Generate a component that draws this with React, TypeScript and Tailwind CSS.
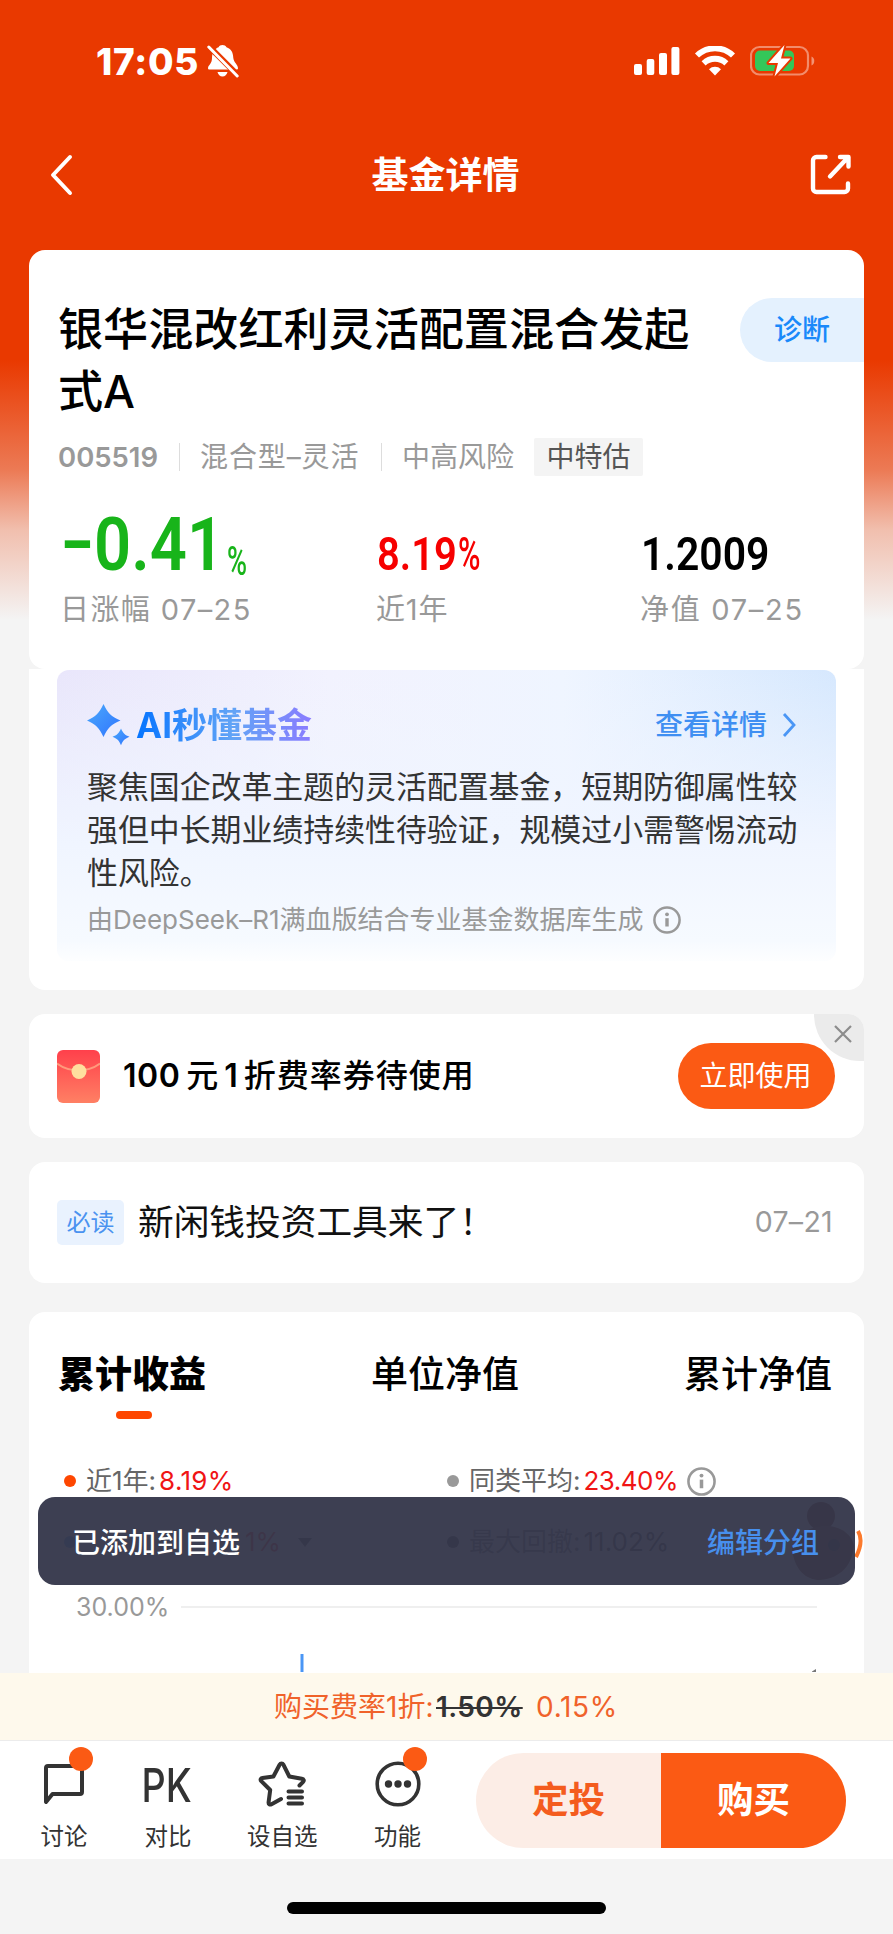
import type { ReactNode } from "react";

function StatusBar() {
    return (
        <div className="flex h-[122px] items-center pl-[96px] pr-[77px] text-white">
            <span className="w-[103px] text-[37px] font-extrabold leading-none tracking-[0.7px]">17:05</span>
            <svg className="ml-[8px]" width="32" height="34" viewBox="0 0 32 34" fill="none">
                <path d="M15.5 1c-1.8 0-3.300.8-3.900 2.200C8 4.500 5 8 5 14c0 6-4 7-4 10.200 0 .8.600 1.300 1.500 1.300h27c.9 0 1.500-.5 1.500-1.300C31 20.500 27 19 26.300 14c-.3-6-2.300-9.200-6.800-10.700C18.800 1.800 17.200 1 15.500 1Z" fill="#fff" />
                <path d="M10.500 28h10c-.6 2.600-2.500 4.500-5 4.500s-4.400-1.900-5-4.500Z" fill="#fff" />
                <path d="M1.500 2 31 31.500" stroke="#e93900" strokeWidth="6" />
                <path d="M1.800 3 30.200 32" stroke="#fff" strokeWidth="3" strokeLinecap="round" />
            </svg>
            <svg className="ml-auto" width="46" height="28" viewBox="0 0 46 28" fill="#fff">
                <rect x="0" y="17" width="8" height="11" rx="2" />
                <rect x="12.700" y="12" width="7.600" height="16" rx="2" />
                <rect x="25" y="6" width="8" height="22" rx="2" />
                <rect x="37.400" y="0" width="8" height="28" rx="2" />
            </svg>
            <svg className="ml-[14px]" width="42" height="30" viewBox="0 0 42 30" fill="none" stroke="#fff">
                <path d="M3 9.500a26 26 0 0 1 36 0" strokeWidth="5.800" />
                <path d="M9.600 17.300a16.500 16.500 0 0 1 22.800 0" strokeWidth="5.800" />
                <path d="M21 29.500 15 23.300a8.600 8.600 0 0 1 12 0Z" fill="#fff" stroke="none" />
            </svg>
            <svg className="ml-[14px]" width="66" height="32" viewBox="0 0 66 32" fill="none">
                <rect x="1" y="2" width="57" height="27.500" rx="8.500" stroke="#fff" strokeOpacity=".42" strokeWidth="2.200" />
                <path d="M61.500 11.500v9c3.700-1.500 3.700-7.500 0-9Z" fill="#fff" fillOpacity=".45" />
                <rect x="5" y="5.500" width="39" height="20.500" rx="5" fill="#34c759" />
                <path d="M34.500 0 18.500 18h9.500l-3.500 13.500L40.500 13.500H31Z" fill="#fff" stroke="#e93900" strokeWidth="4" strokeLinejoin="round" paintOrder="stroke" />
            </svg>
        </div>
    );
}

function NavBar() {
    return (
        <div className="flex h-[106px] items-center justify-between pl-[49px] pr-[41px]">
            <svg width="24" height="42" viewBox="0 0 24 42" fill="none" stroke="#fff" strokeWidth="4" strokeLinecap="round" strokeLinejoin="round">
                <path d="M21 3 4 21l17 18" />
            </svg>
            <h1 className="ml-[8px] text-[37px] font-bold leading-none text-white">基金详情</h1>
            <svg width="42" height="42" viewBox="0 0 42 42" fill="none" stroke="#fff" strokeWidth="4.400" strokeLinecap="round" strokeLinejoin="round">
                <path d="M15.500 3H6.500A3.500 3.500 0 0 0 3 6.500v28A3.500 3.500 0 0 0 6.500 38h28a3.500 3.500 0 0 0 3.500-3.500V29.500" />
                <path d="M30 3h8.500v9.500M37 4.500 20 22.500" />
            </svg>
        </div>
    );
}

function InfoIcon({ size }: { size: number }) {
    return (
        <svg width={size} height={size} viewBox="0 0 28 28" fill="none" stroke="#999">
            <circle cx="14" cy="14" r="12.600" strokeWidth="2.500" />
            <path d="M14 12.200v8.300" strokeWidth="3.400" />
            <circle cx="14" cy="8.300" r="1.900" fill="#999" stroke="none" />
        </svg>
    );
}

function FundCard() {
    return (
        <section className="h-[419px] rounded-[16px] bg-white pt-[48px]">
            <div className="flex items-start justify-between">
                <h2 className="w-[670px] pl-[29px] pt-[1px] text-[45.100px] font-medium leading-[62px] text-black">
                    银华混改红利灵活配置混合发起式A
                </h2>
                <button className="flex h-[64px] w-[124px] items-center rounded-l-full bg-[#e4f1fe] pl-[34px] text-[28px] font-medium leading-none text-[#1989fa]">
                    诊断
                </button>
            </div>
            <div className="mt-[15px] flex h-[38px] items-center pl-[29px] text-[28px] leading-none text-[#999]">
                <span className="w-[121px] pt-[1px] text-[27.500px] font-semibold">005519</span>
                <i className="h-[28px] w-[1px] bg-[#ddd]" />
                <span className="ml-[20px] w-[181px] whitespace-nowrap tracking-[0.9px]">混合型–灵活</span>
                <i className="h-[28px] w-[1px] bg-[#ddd]" />
                <span className="ml-[20px] w-[132px]">中高风险</span>
                <span className="flex h-[38px] w-[109px] items-center justify-center rounded-[2px] bg-[#f4f4f4] text-[#555]">中特估</span>
            </div>
            <div className="mt-[29px] flex h-[76px] pl-[32px] font-[Roboto] font-semibold leading-none">
                <div className="flex w-[316px] text-[#18b41a]">
                    <span className="w-[33px] origin-left scale-x-[0.68] text-[74px] leading-[80px]">–</span>
                    <span className="w-[133px] origin-left scale-x-[0.88] text-[74px] leading-[80px]">0.41</span>
                    <span className="w-[20px] origin-left scale-x-[0.68] pt-[32px] text-[40px] font-medium leading-[50px]">%</span>
                </div>
                <div className="flex w-[264px] pt-[17px] text-[47px] leading-[64px] text-[#f60000]">
                    <span className="w-[81px] origin-left scale-x-[0.85]">8.19</span>
                    <span className="origin-left scale-x-[0.65] font-medium">%</span>
                </div>
                <span className="origin-left scale-x-[0.87] pt-[17px] text-[47px] leading-[64px] text-black">1.2009</span>
            </div>
            <div className="mt-[7px] flex pl-[31px] text-[29px] leading-[44px] text-[#999]">
                <span className="w-[316px] tracking-[1.400px]">日涨幅 07–25</span>
                <span className="w-[264px] tracking-[0.8px]">近1年</span>
                <span className="tracking-[1.700px]">净值 07–25</span>
            </div>
        </section>
    );
}

function AiSummary() {
    return (
        <section className="h-[321px] rounded-b-[16px] bg-white px-[28px] pt-[1px]">
            <div className="h-[291px] rounded-[12px] bg-[linear-gradient(to_bottom,transparent_0%,#f0f5ff_60%,#f6faff_93%,#fdfeff_100%),linear-gradient(to_right,#e9e6fb_0%,#f2f2fe_35%,#eff5ff_65%,#d6e8fe_100%)] px-[30px] pt-[33px]">
                <div className="flex h-[44px] items-center">
                    <svg width="43" height="44" viewBox="0 0 43 44" fill="url(#spark)">
                        <defs>
                            <linearGradient id="spark" x1="0" y1="0" x2="1" y2="1">
                                <stop offset="0" stopColor="#4ba9fb" />
                                <stop offset="1" stopColor="#2f74ff" />
                            </linearGradient>
                        </defs>
                        <path d="M16.500 1C21 10.500 24 13.500 33.500 17.500 24 21.500 21 24.500 16.500 34 12 24.500 9 21.500 0 17.500 9 13.500 12 10.500 16.500 1Z" />
                        <path d="M34 25.500c2.100 4.800 3.900 6.500 8.500 8.300-4.600 1.900-6.400 3.500-8.500 8.400-2.100-4.900-3.900-6.500-8.500-8.400 4.600-1.800 6.400-3.500 8.500-8.300Z" />
                    </svg>
                    <h3 className="ml-[6px] bg-[linear-gradient(to_right,#0574ff,#62a4f6_55%,#8a7bff)] bg-clip-text text-[35px] font-bold leading-[44px] text-transparent">AI秒懂基金</h3>
                    <a className="ml-auto text-[28px] font-medium leading-none text-[#3f8ff2]">查看详情</a>
                    <svg className="ml-[15px] mr-[10px]" width="14" height="28" viewBox="0 0 14 28" fill="none" stroke="#4a96f5" strokeWidth="2.800">
                        <path d="m2 3 10 11L2 25" />
                    </svg>
                </div>
                <p className="mt-[18px] w-[716px] text-[30.900px] leading-[43px] text-[#333]">
                    聚焦国企改革主题的灵活配置基金，短期防御属性较强但中长期业绩持续性待验证，规模过小需警惕流动性风险。
                </p>
                <div className="mt-[9px] flex h-[34px] items-center gap-[9px] whitespace-nowrap text-[26px] leading-none text-[#999]">
                    由DeepSeek–R1满血版结合专业基金数据库生成
                    <InfoIcon size={28} />
                </div>
            </div>
        </section>
    );
}

function CouponCard() {
    return (
        <section className="relative mt-[24px] flex h-[124px] items-center overflow-hidden rounded-[16px] bg-white pl-[28px] pr-[29px]">
            <svg width="43" height="53" viewBox="0 0 43 53">
                <defs>
                    <linearGradient id="packet" x1="0" y1="0" x2="0" y2="1">
                        <stop offset="0" stopColor="#ff404b" />
                        <stop offset="1" stopColor="#ff8064" />
                    </linearGradient>
                </defs>
                <rect width="43" height="53" rx="6" fill="url(#packet)" />
                <path d="M0 13.500c12 9 31 9 43 0" fill="none" stroke="#ff9a7c" strokeWidth="2" />
                <circle cx="22" cy="21.500" r="7.500" fill="#ffdf9e" />
            </svg>
            <span className="ml-[23px] flex items-center gap-[6px] whitespace-nowrap text-[32px] font-medium leading-none text-black">
                <span className="font-semibold tracking-[0.5px]">100</span>
                <span>元</span>
                <span className="font-semibold">1</span>
                <span className="tracking-[1px]">折费率券待使用</span>
            </span>
            <button className="ml-auto h-[66px] w-[157px] rounded-full bg-[#fb5a14] pr-[2px] text-[28px] leading-none text-white">立即使用</button>
            <span className="absolute right-0 top-0 flex h-[47px] w-[50px] items-center justify-center rounded-bl-[46px] bg-[#ebebeb]">
                <svg className="-mt-[7px] ml-[8px]" width="18" height="18" viewBox="0 0 18 18" stroke="#8c8c8c" strokeWidth="2.200">
                    <path d="m1 1 16 16M17 1 1 17" />
                </svg>
            </span>
        </section>
    );
}

function NoticeCard() {
    return (
        <section className="mt-[24px] flex h-[121px] items-center rounded-[16px] bg-white pl-[28px] pr-[31px]">
            <span className="flex h-[45px] w-[67px] items-center justify-center rounded-[5px] bg-[#e9f2fe] text-[24px] leading-none text-[#4a92f0]">必读</span>
            <span className="ml-[14px] whitespace-nowrap text-[35.700px] leading-none text-[#111]">新闲钱投资工具来了！</span>
            <span className="ml-auto text-[28.500px] leading-none tracking-[0.3px] text-[#999]">07–21</span>
        </section>
    );
}

function Legend({ dot, label, children }: { dot: string; label: string; children: ReactNode }) {
    return (
        <div className="flex h-[36px] items-center whitespace-nowrap text-[26px] leading-none text-[#666]">
            <i className={`mr-[10px] h-[12px] w-[12px] rounded-full ${dot}`} />
            <span className="mr-[3px]">{label}</span>
            {children}
        </div>
    );
}

function ChartCard() {
    return (
        <section className="relative mt-[29px] h-[361px] rounded-t-[16px] bg-white">
            <div className="flex justify-between pl-[29px] pr-[32px] pt-[41px] text-[37px] font-medium leading-[44px] text-black">
                <span className="font-black">累计收益</span>
                <span>单位净值</span>
                <span>累计净值</span>
            </div>
            <div className="ml-[87px] mt-[14px] h-[8px] w-[36px] rounded-full bg-[#fe4600]" />
            <div className="mt-[44px] grid grid-cols-[383px_1fr] gap-y-[25px] pl-[35px]">
                <Legend dot="bg-[#fe4600]" label="近1年:">
                    <span className="tracking-[0.3px] text-[#f01414]">8.19%</span>
                </Legend>
                <Legend dot="bg-[#999]" label="同类平均:">
                    <span className="mr-[9px] tracking-[-0.500px] text-[#f01414]">23.40%</span>
                    <InfoIcon size={29} />
                </Legend>
                <Legend dot="bg-[#3b8df5]" label="">
                    <span className="ml-[156px] text-[#f01414]">1%</span>
                    <i className="ml-[17px] border-x-[7px] border-t-[9px] border-x-transparent border-t-[#444]" />
                </Legend>
                <Legend dot="bg-[#333]" label="最大回撤:">
                    <span className="text-[#333]">11.02%</span>
                </Legend>
            </div>
            <div className="mt-[31px] flex h-[32px] items-center pl-[47px] text-[25px] leading-none text-[#999]">
                30.00%
                <i className="ml-auto mr-[47px] h-[2px] w-[636px] bg-[#efefef]" />
            </div>
            <svg className="mt-[31px] block" width="835" height="18" viewBox="0 0 835 18">
                <path d="M271.500 18V0h3v18Z" fill="#4a96f5" />
                <path d="M783 17.500 787 15v3h-4Z" fill="#777" />
            </svg>

            {/* floating assistant, mostly under the toast */}
            <svg className="absolute right-0 top-[188px]" width="90" height="84" viewBox="0 0 90 84">
                <circle cx="47" cy="16" r="14" fill="#701c08" />
                <path d="M18 48c6-16 20-22 34-22 14 0 26 8 28 20-2 18-12 32-34 34-14 0-26-10-28-32Z" fill="#803c1c" />
                <circle cx="60" cy="45" r="6" fill="#222" />
                <path d="M84 31q6 10-2 26" fill="none" stroke="#fc7a2c" strokeWidth="4" />
            </svg>
            <div className="absolute left-[9px] top-[185px] flex h-[88px] w-[817px] items-center justify-between rounded-[17px] bg-[#35374b]/96 pl-[34px] pr-[36px] pt-[3px] text-[28px] font-medium leading-none text-white">
                已添加到自选
                <a className="text-[#478fed]">编辑分组</a>
            </div>
        </section>
    );
}

function TabItem({ label, left, badge, children }: { label: string; left: string; badge?: boolean; children: ReactNode }) {
    return (
        <div className={`flex flex-col items-center ${left}`}>
            <div className="relative flex h-[48px] w-[48px] items-center justify-center">
                {children}
                {badge && <i className="absolute -top-[13px] right-[-5px] h-[24px] w-[24px] rounded-full bg-[#fb5a14]" />}
            </div>
            <span className="mt-[15px] whitespace-nowrap text-[23.500px] leading-[28px] text-[#333]">{label}</span>
        </div>
    );
}

function BottomBar() {
    return (
        <footer>
            <div className="flex h-[68px] items-center whitespace-nowrap border-b border-[#ececec] bg-[#fef9ec] pl-[274px] text-[28px] leading-none text-[#f0622a]">
                <span className="w-[162px]">购买费率1折:</span>
                <s className="w-[100px] font-semibold tracking-[0.4px] text-[#333]">1.50%</s>
                <span className="tracking-[0.7px]">0.15%</span>
            </div>
            <div className="flex h-[118px] bg-white pt-[19px]">
                <TabItem label="讨论" left="ml-[40px]" badge>
                    <svg width="44" height="44" viewBox="0 0 44 44" fill="none" stroke="#333" strokeWidth="4" strokeLinejoin="round">
                        <path d="M4 40V6a2 2 0 0 1 2-2h32a2 2 0 0 1 2 2v24a2 2 0 0 1-2 2H10.500L4 40Z" />
                    </svg>
                </TabItem>
                <TabItem label="对比" left="ml-[56px]">
                    <span className="mr-[2px] mt-[2px] scale-x-[0.82] text-[46px] font-medium leading-none text-[#333]">PK</span>
                </TabItem>
                <TabItem label="设自选" left="ml-[55px]">
                    <svg width="48" height="48" viewBox="0 0 48 48" fill="none" stroke="#333" strokeWidth="4" strokeLinecap="round" strokeLinejoin="round">
                        <path d="m23 39-9.500 5.200c-1.700.9-3.100-.1-2.900-2L12.200 30 3.300 21.200c-1.300-1.400-.7-2.900 1.100-3.200l11-1.500L21.600 4.800c1-1.800 2.900-1.800 3.900 0l5.800 11.700 12.500 2.300c2 .4 2.600 1.700 1.300 3.100L41.500 25.500" />
                        <path d="M30.500 31.500H44M30.500 37.500H44M30.500 43.500H44" />
                    </svg>
                </TabItem>
                <TabItem label="功能" left="ml-[56px]" badge>
                    <svg width="46" height="46" viewBox="0 0 46 46" fill="#333">
                        <circle cx="23" cy="23" r="20.800" fill="none" stroke="#333" strokeWidth="3.600" />
                        <circle cx="13.500" cy="23" r="3.700" />
                        <circle cx="23" cy="23" r="3.700" />
                        <circle cx="32.500" cy="23" r="3.700" />
                    </svg>
                </TabItem>
                <div className="-mt-[7px] ml-auto mr-[47px] flex h-[95px] w-[370px] overflow-hidden rounded-full text-[36.500px] font-bold leading-none">
                    <button className="flex-1 bg-[#fcede6] text-[#f45c1e]">定投</button>
                    <button className="flex-1 bg-[#fb5a14] text-white">购买</button>
                </div>
            </div>
            <div className="flex h-[75px] justify-center bg-[#f4f4f4] pt-[43px]">
                <div className="h-[12px] w-[319px] rounded-full bg-black" />
            </div>
        </footer>
    );
}

export default function App() {
    return (
        <div className="h-[1934px] w-[893px] overflow-hidden bg-[#f4f4f4] bg-[linear-gradient(to_bottom,#e93900_0px,#e93900_360px,#ec7a55_470px,#f1bfae_530px,#f4f4f4_620px)] font-[Inter,'Noto_Sans_CJK_SC',sans-serif]">
            <StatusBar />
            <NavBar />
            <main className="ml-[29px] mt-[22px] w-[835px]">
                <FundCard />
                <AiSummary />
                <CouponCard />
                <NoticeCard />
                <ChartCard />
            </main>
            <BottomBar />
        </div>
    );
}
